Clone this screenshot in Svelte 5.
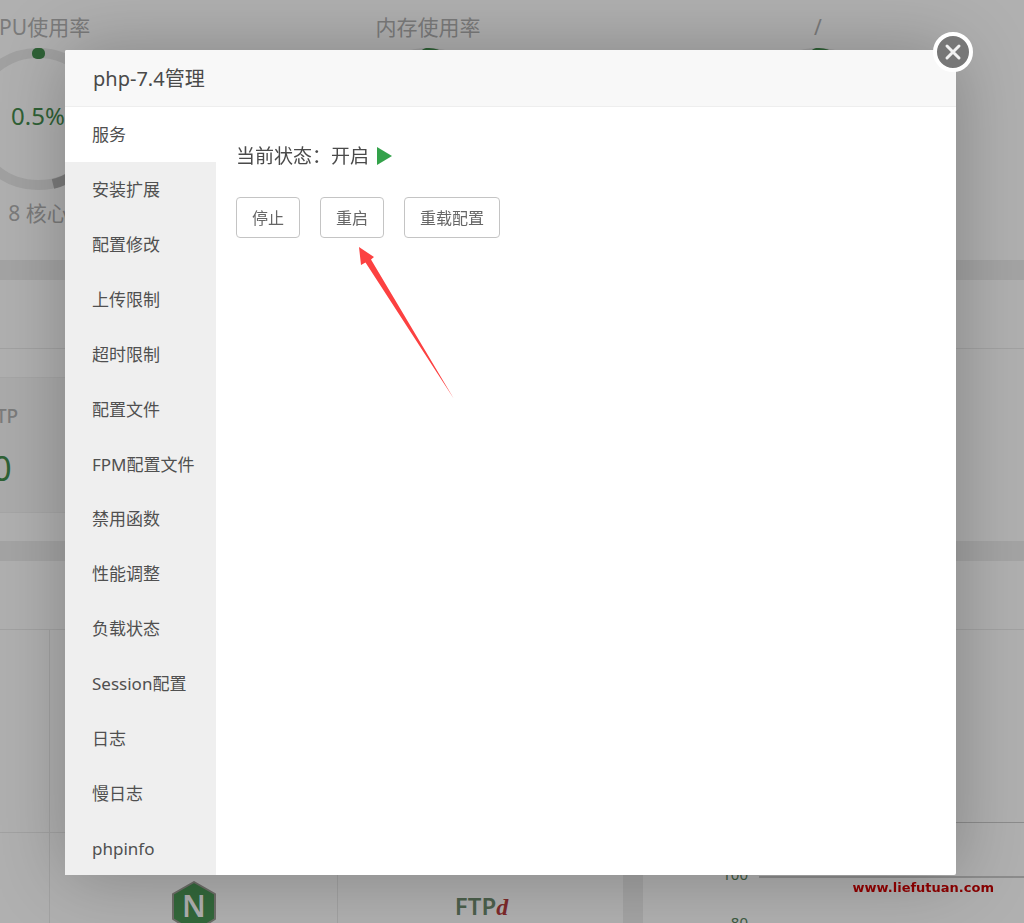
<script lang="ts">
  const menu = [
    "服务",
    "安装扩展",
    "配置修改",
    "上传限制",
    "超时限制",
    "配置文件",
    "FPM配置文件",
    "禁用函数",
    "性能调整",
    "负载状态",
    "Session配置",
    "日志",
    "慢日志",
    "phpinfo",
  ];

  const gauges = [
    { label: "CPU使用率", value: "0.5%", note: "8 核心" },
    { label: "内存使用率", value: "", note: "" },
    { label: "/", value: "", note: "" },
  ];

  let active = $state("服务");
  let running = $state(true);
</script>

<div class="page">
  <section class="card gauges">
    {#each gauges as gauge, i}
      <div class="gauge">
        <span class="gauge-label">{gauge.label}</span>
        <div class="ring">
          <svg viewBox="0 0 142 142" aria-hidden="true">
            <circle cx="71" cy="71" r="66" fill="none" stroke="#a1a1a1" stroke-width="10" />
            {#if i === 0}
              <path d="M86 136A66 66 0 0 0 108 126" fill="none" stroke="#7c7c7c" stroke-width="10" />
              <rect x="65" y="0" width="13" height="11" rx="5" fill="#2f6136" />
            {:else}
              <path d="M61 6Q66 -1 72 0Q82 0 88 6Z" fill="#2f6136" />
            {/if}
          </svg>
          <span class="gauge-value">{gauge.value}</span>
        </div>
        <span class="gauge-note">{gauge.note}</span>
      </div>
    {/each}
  </section>

  <section class="card">
    <div class="card-title"></div>
    <div class="overview">
      <div class="overview-item">
        <span>FTP</span>
        <strong>0</strong>
      </div>
    </div>
  </section>

  <div class="columns">
    <section class="card">
      <div class="card-title"></div>
      <div class="software">
        <div class="soft"></div>
        <div class="soft"></div>
        <div class="soft"></div>
        <div class="soft"></div>
        <div class="soft">
          <svg class="nginx" viewBox="0 0 46 52" role="img" aria-label="Nginx">
            <path d="M23 1L44 13V38L23 51L2 38V13Z" fill="#33683b" stroke="#6d6d68" stroke-width="2" stroke-linejoin="round" />
            <text x="23" y="36" text-anchor="middle">N</text>
          </svg>
        </div>
        <div class="soft">
          <span class="ftpd">FTP<i>d</i></span>
        </div>
      </div>
    </section>

    <section class="card">
      <div class="card-title"></div>
      <div class="traffic"></div>
      <div class="chart">
        <div class="tick"><span>100</span><hr /></div>
        <div class="tick"><span>80</span></div>
      </div>
    </section>
  </div>
</div>

<div class="overlay">
  <div class="dialog" role="dialog" aria-labelledby="dialog-title">
    <header>
      <h1 id="dialog-title">php-7.4管理</h1>
    </header>
    <button class="close" type="button" aria-label="关闭">
      <svg viewBox="0 0 40 40" aria-hidden="true">
        <circle cx="20" cy="20" r="18" fill="#777" stroke="#fff" stroke-width="4" />
        <path d="M14 14L26 26M26 14L14 26" stroke="#f2f2f2" stroke-width="3" stroke-linecap="round" />
      </svg>
    </button>

    <div class="body">
      <nav>
        {#each menu as item}
          <button type="button" class:active={active === item} onclick={() => (active = item)}>
            {item}
          </button>
        {/each}
      </nav>

      <main>
        <p class="status">
          当前状态：{running ? "开启" : "停止"}
          <svg viewBox="0 0 15 18" aria-hidden="true">
            <path d="M0 0L15 9L0 18Z" fill="#33a24a" />
          </svg>
        </p>
        <div class="actions">
          <button type="button" onclick={() => (running = !running)}>停止</button>
          <button type="button" onclick={() => (running = true)}>重启</button>
          <button type="button">重载配置</button>
        </div>
        <!-- points at the restart button -->
        <svg class="arrow" viewBox="0 0 96 152" aria-hidden="true">
          <path d="M0 0L15 10L12 12.500L95 152L6.500 15.500L2 18Z" fill="#fc4141" />
        </svg>
      </main>
    </div>
  </div>
</div>

<a class="site" href="http://www.liefutuan.com">www.liefutuan.com</a>

<style>
  :global(body) {
    margin: 0;
    overflow: hidden;
    font-family: "Noto Sans", "Noto Sans CJK SC", sans-serif;
  }

  button {
    font-family: inherit;
    cursor: pointer;
  }

  .page {
    height: 100vh;
    display: flex;
    flex-direction: column;
    gap: 20px;
    overflow: hidden;
    background: #a4a4a4;
    color: #7b7b7b;
  }

  .card {
    background: #b0b0b0;
    overflow: hidden;
    flex-shrink: 0;
  }

  .card-title {
    height: 68px;
    border-bottom: 1px solid #a2a2a2;
  }

  .gauges {
    display: flex;
    height: 260px;
  }

  .gauge {
    width: 390px;
    flex-shrink: 0;
    display: flex;
    flex-direction: column;
    align-items: center;
    padding-top: 8px;
  }

  .gauge:first-child {
    margin-left: -157px;
  }

  .gauge-label {
    height: 40px;
    font-size: 21px;
    line-height: 38px;
  }

  .ring {
    display: grid;
    justify-items: center;
    width: 142px;
    height: 142px;
  }

  .ring > * {
    grid-area: 1 / 1;
  }

  .gauge-value {
    color: #2f6136;
    font-size: 24px;
    line-height: 136px;
  }

  .gauge-note {
    font-size: 21px;
    line-height: 46px;
  }

  .overview {
    display: flex;
    padding: 28px 0;
  }

  .overview-item {
    width: 300px;
    height: 134px;
    margin-left: -149px;
    display: flex;
    flex-direction: column;
    align-items: center;
    border: 1px solid #a6a6a6;
    background: #ababab;
    font-size: 19px;
    font-weight: 500;
    line-height: 76px;
  }

  .overview-item strong {
    color: #2f6136;
    font-size: 34px;
    font-weight: 400;
    line-height: 28px;
  }

  .columns {
    flex: 1;
    display: grid;
    grid-template-columns: 1.635fr 1fr;
    gap: 20px;
    min-height: 0;
  }

  .software {
    display: grid;
    grid-template-columns: repeat(3, 288px);
    grid-auto-rows: 203px;
    margin-left: -238px;
  }

  .soft {
    display: flex;
    align-items: flex-start;
    justify-content: center;
    padding-top: 48px;
    box-sizing: border-box;
    border-right: 1px solid #a2a2a2;
    border-bottom: 1px solid #a2a2a2;
  }

  .nginx {
    width: 46px;
    height: 52px;
  }

  .nginx text {
    font-size: 30px;
    font-weight: 600;
    fill: #b0b0b0;
  }

  .ftpd {
    color: #4c604c;
    font-size: 24px;
    font-weight: 600;
    line-height: 50px;
  }

  .ftpd i {
    color: #7d2a2a;
    font-family: "Liberation Serif", serif;
    font-weight: 700;
  }

  .traffic {
    height: 192px;
    border-bottom: 1px solid #8c8c8c;
  }

  .chart {
    padding: 40px 0 0 64px;
  }

  .tick {
    display: flex;
    align-items: flex-start;
    gap: 11px;
    height: 48px;
    color: #3d5a40;
    font-size: 15px;
    line-height: 22px;
  }

  .tick span {
    width: 41px;
    text-align: right;
  }

  .tick hr {
    flex: 1;
    margin: 13px 0 0;
    border: 0;
    border-top: 2px solid #8c8c8c;
  }

  .overlay {
    position: fixed;
    inset: 0;
    display: flex;
    padding: 50px 68px 48px 65px;
  }

  .dialog {
    position: relative;
    flex: 1;
    display: flex;
    flex-direction: column;
    border-radius: 2px;
    background: #fff;
    box-shadow: 1px 1px 72px rgba(0, 0, 0, 0.26);
  }

  header {
    padding: 2px 28px 0;
    border-bottom: 1px solid #eee;
    border-radius: 2px 2px 0 0;
    background: #f8f8f8;
  }

  h1 {
    margin: 0;
    color: #4a4a4a;
    font-size: 20px;
    font-weight: 400;
    line-height: 54px;
  }

  .close {
    position: absolute;
    top: -18px;
    right: -17px;
    width: 40px;
    height: 40px;
    padding: 0;
    border: 0;
    border-radius: 50%;
    background: none;
  }

  .close svg {
    display: block;
  }

  .body {
    flex: 1;
    display: flex;
    min-height: 0;
  }

  nav {
    width: 151px;
    display: flex;
    flex-direction: column;
    background: #efefef;
  }

  nav button {
    flex: 1;
    padding: 2px 0 0 27px;
    border: 0;
    background: none;
    color: #505050;
    font-size: 17px;
    line-height: 24px;
    text-align: left;
  }

  nav button.active {
    background: #fff;
  }

  main {
    position: relative;
    flex: 1;
    padding: 32px 20px;
  }

  .status {
    display: flex;
    align-items: center;
    gap: 8px;
    margin: 0;
    color: #4a4a4a;
    font-size: 19px;
    line-height: 34px;
  }

  .status svg {
    width: 15px;
    height: 18px;
  }

  .actions {
    display: flex;
    gap: 20px;
    margin-top: 24px;
  }

  .actions button {
    height: 41px;
    padding: 0 15px 2px;
    border: 1px solid #c4c4c4;
    border-radius: 4px;
    background: #fff;
    color: #666;
    font-size: 16px;
  }

  .arrow {
    position: absolute;
    top: 140px;
    left: 143px;
    width: 96px;
    height: 152px;
  }

  .site {
    position: fixed;
    right: 30px;
    bottom: 25px;
    color: #850000;
    font-family: "DejaVu Sans", sans-serif;
    font-size: 13px;
    font-weight: 700;
    line-height: 20px;
    text-decoration: none;
  }
</style>
